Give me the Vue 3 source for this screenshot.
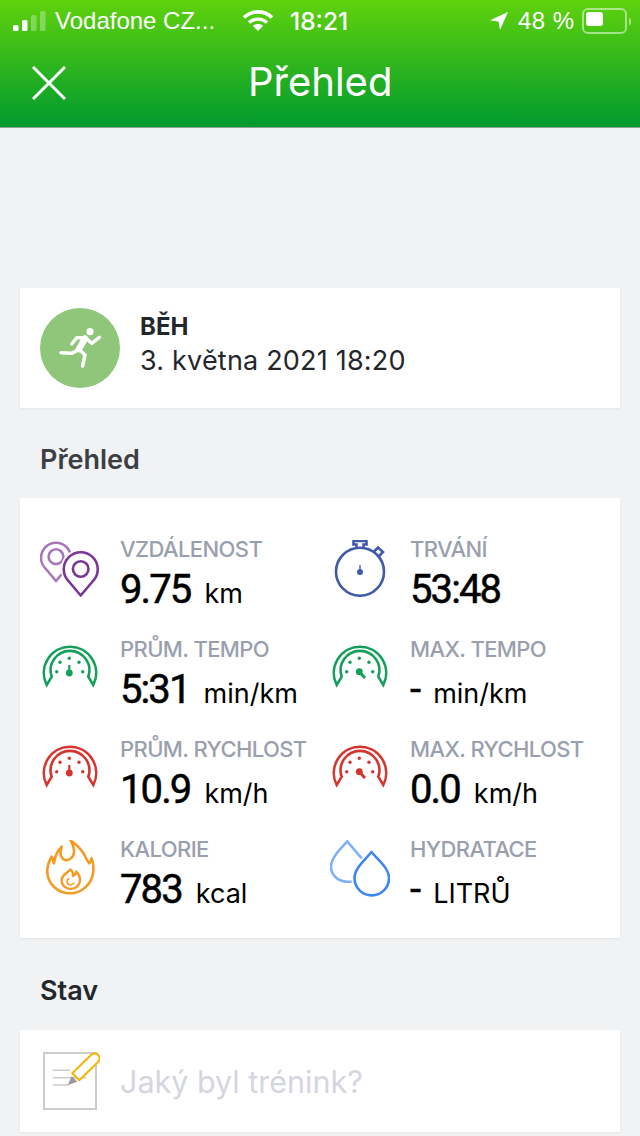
<template>
  <div class="screen">
    <header class="top">
      <div class="status">
        <div class="status-left">
          <svg class="signal" width="36" height="24" viewBox="0 0 36 24">
            <rect x="0" y="14" width="5.5" height="6" rx="1.5" fill="#fff" />
            <rect x="9" y="9" width="5.5" height="11" rx="1.5" fill="#fff" />
            <rect x="18" y="4" width="5.5" height="16" rx="1.5" fill="#fff" opacity="0.3" />
            <rect x="27" y="0" width="5.5" height="20" rx="1.5" fill="#fff" opacity="0.3" />
          </svg>
          <span class="carrier">Vodafone CZ...</span>
          <svg class="wifi" width="30" height="22" viewBox="0 0 30 22">
            <path d="M1 7.5C9 0 21 0 29 7.5" fill="none" stroke="#fff" stroke-width="3.6" />
            <path d="M6 12.5C11 8 19 8 24 12.5" fill="none" stroke="#fff" stroke-width="3.4" />
            <path d="M15 21L9.8 15.8C12.6 13.4 17.4 13.4 20.2 15.8Z" fill="#fff" />
          </svg>
        </div>
        <span class="time">18:21</span>
        <div class="status-right">
          <svg width="18" height="18" viewBox="0 0 18 18">
            <path d="M18 0L0 8.2L8.6 9.4L10 18Z" fill="#fff" />
          </svg>
          <span class="percent">48 %</span>
          <div class="battery"><div class="battery-fill"></div></div>
          <div class="battery-nub"></div>
        </div>
      </div>
      <div class="nav">
        <svg class="close" width="34" height="34" viewBox="0 0 34 34">
          <path d="M1 1L33 33M33 1L1 33" stroke="#fff" stroke-width="3" fill="none" />
        </svg>
        <h1 class="nav-title">Přehled</h1>
      </div>
    </header>

    <main class="content">
      <section class="card activity">
        <div class="activity-icon">
          <svg width="80" height="80" viewBox="0 0 80 80">
            <circle cx="50" cy="23.7" r="3.6" fill="#fff" />
            <g fill="none" stroke="#fff" stroke-linecap="round" stroke-linejoin="round">
              <path d="M45 30.5L39 41" stroke-width="6.5" />
              <path d="M43 29.7H36.7L31.7 36" stroke-width="3.4" />
              <path d="M47 31L51.7 35.3L59.3 29.3" stroke-width="3.4" />
              <path d="M39.5 42L45 47L42.7 58" stroke-width="3.6" />
              <path d="M38 42L31.7 45.3L21 44.7" stroke-width="3.6" />
            </g>
          </svg>
        </div>
        <div class="activity-text">
          <div class="activity-name">BĚH</div>
          <div class="activity-date">3. května 2021 18:20</div>
        </div>
      </section>

      <h2 class="section-title">Přehled</h2>

      <section class="card stats">
        <div v-for="stat in stats" :key="stat.label" class="stat">
          <svg class="stat-icon" width="60" height="60" viewBox="0 0 60 60" fill="none">
            <template v-if="stat.icon === 'pins'">
              <path d="M16 41L5.5 28.5A15 15 0 1 1 26.5 28.5Z" stroke="#a678b8" stroke-width="2.6" stroke-linejoin="round" />
              <circle cx="16" cy="16.7" r="7.4" stroke="#a678b8" stroke-width="2.6" />
              <path d="M40.7 55.5L28.5 41A17 17 0 1 1 53 41Z" fill="#fff" stroke="#fff" stroke-width="6" />
              <path d="M40.7 55.5L28.5 41A17 17 0 1 1 53 41Z" stroke="#7a3797" stroke-width="2.6" stroke-linejoin="round" />
              <circle cx="40.7" cy="29" r="7.8" stroke="#7a3797" stroke-width="2.6" />
            </template>
            <template v-else-if="stat.icon === 'watch'">
              <circle cx="30" cy="31.7" r="24" stroke="#3f5ba9" stroke-width="2.6" />
              <path d="M26.5 7.5V4.5H23.5V1H36.5V4.5H33.5V7.5" stroke="#3f5ba9" stroke-width="2.6" />
              <path d="M43.5 12L48 7.5L53 12L48.5 16.5" stroke="#3f5ba9" stroke-width="2.6" />
              <circle cx="30" cy="32" r="3" fill="#3f5ba9" />
              <path d="M30 25V31" stroke="#3f5ba9" stroke-width="1.4" />
            </template>
            <template v-else-if="stat.icon === 'flame'">
              <path d="M11.7 16.7L14 23.3C15 15 18 10 21.7 6.7C20.5 10 20 13 21 16C23 20.5 27 21 30 19C34.5 16 36 9 30.7 0.5C37 5 43 11 45.5 17C47 20 48.5 22.5 49.3 23.3C50.5 22 51.3 20 51.7 18.3C53.3 23 53.8 27 53.3 31.7C52 44 42 53.3 30 53.3C18 53.3 8 44 7.3 32.5C7 26 9 21 11.7 16.7Z" stroke="#f59a23" stroke-width="2.6" stroke-linejoin="round" />
              <path d="M30.7 29.5C33 32 33.5 34 33 36C36 34 36.5 32.5 36 31.5C39 34 40 37 40 40C40 45 36 49 30.7 49C25.5 49 21.5 45 21.5 40.5C21.5 35.5 26 33.5 30.7 29.5Z" stroke="#f59a23" stroke-width="2.4" stroke-linejoin="round" />
              <path d="M29 38C27 40 26.5 41.5 27.5 43.5C29 45.5 33 45 34 42.5" stroke="#f59a23" stroke-width="1.6" />
            </template>
            <template v-else-if="stat.icon === 'drops'">
              <path d="M21.7 41.7H17C8 41.7 1 35 1 26.7C1 18 10 9 17.3 1.5L31.7 18.3" stroke="#7fb0f8" stroke-width="2.6" />
              <path d="M41.5 12C35 20 24.5 28 24.5 38.3A17.2 17 0 0 0 59 38.3C59 28 48 20 41.5 12Z" stroke="#3f86ee" stroke-width="2.6" stroke-linejoin="round" />
            </template>
            <template v-else>
              <path d="M6.7 45A26.2 26.2 0 1 1 53.3 45L48.3 36.7A19.4 19.4 0 1 0 11.7 36.7Z" :stroke="stat.color" stroke-width="2.6" stroke-linejoin="miter" />
              <g :fill="stat.color">
                <circle cx="16.7" cy="31.7" r="1.7" />
                <circle cx="20" cy="22.3" r="1.7" />
                <circle cx="29.3" cy="18.3" r="1.7" />
                <circle cx="39" cy="22.3" r="1.7" />
                <circle cx="42.7" cy="31.7" r="1.7" />
                <circle v-if="stat.icon === 'gauge'" cx="29.3" cy="33" r="3.4" />
                <circle v-else cx="29.3" cy="31.7" r="3.4" />
              </g>
              <path v-if="stat.icon === 'gauge'" d="M29.3 25V32" :stroke="stat.color" stroke-width="2.2" />
              <path v-else d="M29.3 31.7L35 38" :stroke="stat.color" stroke-width="3" />
            </template>
          </svg>
          <div class="stat-text">
            <div class="stat-label">{{ stat.label }}</div>
            <div class="stat-value">
              <span class="stat-number">{{ stat.value }}</span>
              <span class="stat-unit">{{ stat.unit }}</span>
            </div>
          </div>
        </div>
      </section>

      <h2 class="section-title state-title">Stav</h2>

      <section class="card note">
        <svg width="60" height="60" viewBox="0 0 60 60" fill="none">
          <rect x="4" y="2" width="52" height="56" stroke="#cccccc" stroke-width="2" />
          <path d="M12.7 19.3H30M12.7 26.7H46M12.7 34H28" stroke="#cccccc" stroke-width="1.6" />
          <path d="M27.7 34.3L31.7 25L37.3 30.7Z" fill="#9a9a9a" />
          <path d="M32.3 22.3L51 4Q55 0.7 58.3 4Q60.7 7.3 58.3 10.7L39.3 29.3Z" fill="#fff" stroke="#f5b400" stroke-width="2" stroke-linejoin="round" />
        </svg>
        <span class="note-placeholder">Jaký byl trénink?</span>
      </section>
    </main>
  </div>
</template>

<script setup>
const green = '#15a05a'
const red = '#d5352f'

const stats = [
  { label: 'VZDÁLENOST', value: '9.75', unit: 'km', icon: 'pins' },
  { label: 'TRVÁNÍ', value: '53:48', unit: '', icon: 'watch' },
  { label: 'PRŮM. TEMPO', value: '5:31', unit: 'min/km', icon: 'gauge', color: green },
  { label: 'MAX. TEMPO', value: '-', unit: 'min/km', icon: 'gauge-max', color: green },
  { label: 'PRŮM. RYCHLOST', value: '10.9', unit: 'km/h', icon: 'gauge', color: red },
  { label: 'MAX. RYCHLOST', value: '0.0', unit: 'km/h', icon: 'gauge-max', color: red },
  { label: 'KALORIE', value: '783', unit: 'kcal', icon: 'flame' },
  { label: 'HYDRATACE', value: '-', unit: 'LITRŮ', icon: 'drops' }
]
</script>

<style>
html,
body {
  margin: 0;
  background: #f0f1f4;
}
</style>

<style scoped>
.screen {
  width: 640px;
  height: 1136px;
  overflow: hidden;
  background: #f1f2f4;
  font-family: Inter, sans-serif;
  color: #23272b;
}

.top {
  height: 127px;
  border-bottom: 1px solid #8fa394;
  background: linear-gradient(#5fd20d, #009a2f);
  color: #fff;
}

.status {
  height: 42px;
  padding-left: 13px;
  display: flex;
  align-items: center;
  font-family: "Liberation Sans", sans-serif;
  font-size: 24px;
}

.status-left {
  width: 277px;
  display: flex;
  align-items: center;
}

.signal {
  width: 36px;
  margin-top: 4px;
  flex-shrink: 0;
}

.carrier {
  margin-left: 6px;
  width: 188px;
  white-space: nowrap;
}

.time {
  width: 200px;
  font-family: Inter, sans-serif;
  font-size: 24.5px;
  font-weight: 500;
}

.status-right {
  display: flex;
  align-items: center;
}

.percent {
  margin-left: 10px;
  letter-spacing: 0.5px;
}

.battery {
  margin-left: 7px;
  width: 37px;
  height: 18px;
  padding: 2px;
  border: 2px solid rgba(255, 255, 255, 0.5);
  border-radius: 6px;
}

.battery-fill {
  width: 17px;
  height: 14px;
  background: #fff;
  border-radius: 3px;
}

.battery-nub {
  margin-left: 2px;
  width: 2px;
  height: 7px;
  background: rgba(255, 255, 255, 0.5);
  border-radius: 0 2px 2px 0;
}

.nav {
  height: 85px;
  padding-left: 32px;
  display: flex;
  align-items: center;
}

.close {
  flex-shrink: 0;
  margin-bottom: 4px;
}

.nav-title {
  margin: 0 0 6px 182px;
  font-size: 40px;
  font-weight: 400;
}

.content {
  padding: 160px 20px 0;
}

.card {
  background: #fff;
  box-shadow: 0 1px 2px rgba(0, 0, 0, 0.06);
}

.activity {
  height: 120px;
  padding-left: 20px;
  display: flex;
  align-items: center;
}

.activity-icon {
  width: 80px;
  height: 80px;
  border-radius: 50%;
  background: #90c67a;
}

.activity-text {
  margin-left: 20px;
}

.activity-name {
  font-size: 24px;
  font-weight: 700;
  line-height: 32px;
  margin-top: -6px;
}

.activity-date {
  font-size: 27px;
  letter-spacing: 0.2px;
  line-height: 36px;
}

.section-title {
  margin: 0;
  padding: 36px 0 23px 20px;
  font-size: 27px;
  line-height: 31px;
  font-weight: 600;
  color: #3b3f44;
}

.state-title {
  padding: 37px 0 24px 20px;
  color: #23272b;
}

.stats {
  height: 440px;
  box-sizing: border-box;
  padding: 42px 0 0 20px;
  display: grid;
  grid-template-columns: 290px 290px;
  grid-auto-rows: 60px;
  row-gap: 40px;
}

.stat {
  display: flex;
}

.stat-text {
  margin-left: 20px;
  margin-top: -6px;
}

.stat-label {
  font-size: 22px;
  font-weight: 500;
  letter-spacing: -0.6px;
  line-height: 30px;
  color: #9a9fae;
  white-space: nowrap;
}

.stat-value {
  margin-top: 3px;
  line-height: 46px;
  white-space: nowrap;
  color: #000;
}

.stat-number {
  font-family: Roboto, sans-serif;
  font-size: 40px;
  font-weight: 400;
  letter-spacing: -1.9px;
  -webkit-text-stroke: 0.5px #000;
}

.stat-unit {
  margin-left: 14px;
  font-size: 27px;
}

.note {
  height: 102px;
  padding-left: 20px;
  display: flex;
  align-items: center;
}

.note-placeholder {
  margin-left: 20px;
  font-size: 30.5px;
  color: #d4d6df;
}
</style>
